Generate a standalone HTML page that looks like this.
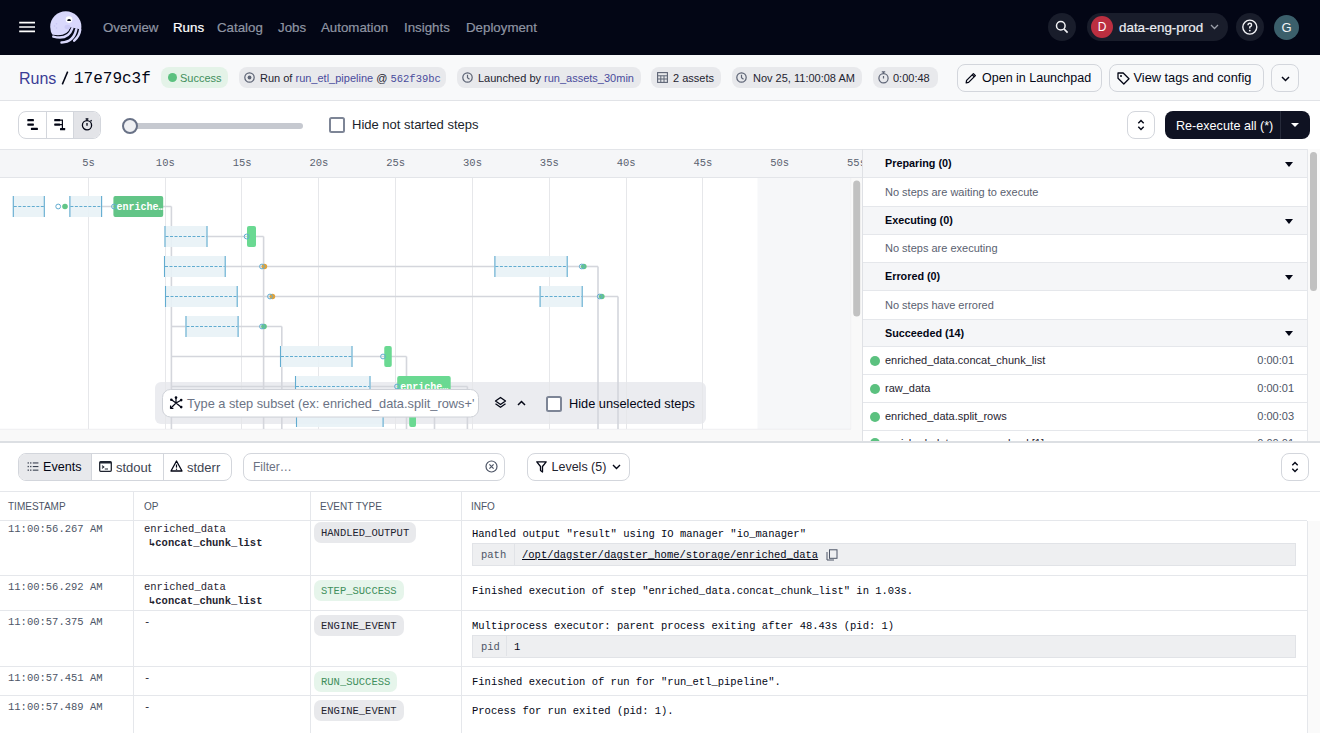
<!DOCTYPE html>
<html><head><meta charset="utf-8">
<style>
*{box-sizing:border-box;margin:0;padding:0}
html,body{width:1320px;height:733px;overflow:hidden;background:#fff;font-family:"Liberation Sans",sans-serif;color:#030615}
.a{position:absolute;white-space:nowrap}
.mono{font-family:"Liberation Mono",monospace}
.navi{position:absolute;top:19.5px;font-size:13.3px;color:#8f95a3;white-space:nowrap;-webkit-text-stroke:0.2px currentColor}
.tag{position:absolute;top:67px;height:21px;border-radius:8px;background:#e8e9ec;font-size:11px;color:#1f2430;white-space:nowrap;line-height:22px}
.tag span.l{color:#4a4c9c}
.btn{position:absolute;background:#f8f9fa;border:1px solid #d3d6dc;border-radius:8px;font-size:12.7px;color:#030615;white-space:nowrap}
.ph{position:absolute;left:863px;width:444px;height:28px;background:#f5f6f8;border-bottom:1px solid #e5e7eb;font-size:10.8px;font-weight:700;color:#030615;padding-left:22px;line-height:27px}
.pb{position:absolute;left:863px;width:444px;height:28px;background:#fff;border-bottom:1px solid #e5e7eb;font-size:11px;color:#5a6170;padding-left:22px;line-height:27px}
.pr{position:absolute;left:863px;width:444px;height:28px;background:#fff;border-bottom:1px solid #e5e7eb;font-size:11px;color:#1f2430;padding-left:22px;line-height:27px}
.pr .dot{position:absolute;left:6.5px;top:8.5px;width:10px;height:10px;border-radius:5px;background:#5bc17f}
.pr .t{position:absolute;right:13px;top:0;color:#4d5566}
.caret{position:absolute;left:1285px;width:0;height:0;border-left:4.5px solid transparent;border-right:4.5px solid transparent;border-top:5px solid #030615}
.th{position:absolute;top:492px;height:29px;font-size:10px;color:#4d5566;line-height:29px}
.ts{position:absolute;left:8px;font-size:10.5px;color:#4d5566}
.op{position:absolute;left:144px;font-size:10.5px;color:#1f2430}
.badge{position:absolute;left:314px;height:21px;border-radius:7px;background:#e8e9ec;font-size:10.5px;color:#1f2430;line-height:22px;padding:0 7px}
.badge.g{background:#e6f5eb;color:#3f8f5c}
.info{position:absolute;left:472px;font-size:10.5px;color:#030615}
.kv{position:absolute;left:472px;width:824px;height:23px;background:#eeeff1;border:1px solid #e1e3e7;font-size:10.5px;line-height:22px}
.kv .k{position:absolute;left:8px;color:#4d5566}
.kv .sep{position:absolute;left:41px;top:0;width:1px;height:21px;background:#e1e3e7}
.kv .v{position:absolute;left:49px;color:#030615}
.hl{position:absolute;left:0;width:1307px;height:1px;background:#e5e7eb}
</style></head><body>

<!-- ============ NAV ============ -->
<div class="a" style="left:0;top:0;width:1320px;height:55px;background:#030615"></div>
<svg class="a" style="left:18px;top:18px" width="20" height="18" viewBox="0 0 20 18"><path d="M1.2 4.7 H17 M1.2 9 H17 M1.2 13.4 H17" stroke="#fff" stroke-width="1.7"/></svg>
<svg class="a" style="left:45px;top:5px" width="45" height="45" viewBox="0 0 45 45">
  <defs><clipPath id="hc"><path d="M0 0 H45 V25 L36 24.5 Q30 23 25.3 22.3 Q22.5 32 8 29.8 L0 29.5 Z"/></clipPath></defs>
  <circle cx="20.8" cy="21.9" r="15.6" fill="#d9d8fc" clip-path="url(#hc)"/>
  <path d="M8.3 31.6 Q23 35.5 27.3 23.3" stroke="#d9d8fc" stroke-width="2.5" fill="none" stroke-linecap="round"/>
  <path d="M16.5 37.4 Q28.5 37.5 31.3 24.3" stroke="#d9d8fc" stroke-width="2.5" fill="none" stroke-linecap="round"/>
  <path d="M29.2 35.6 Q34.5 31 35.2 24.6" stroke="#d9d8fc" stroke-width="2.5" fill="none" stroke-linecap="round"/>
  <circle cx="24" cy="14.6" r="3.3" fill="#fff"/>
  <path d="M22.2 16 A1.9 1.9 0 0 1 26 16 Z" fill="#030615"/>
  <ellipse cx="22.5" cy="22" rx="3" ry="2.2" fill="#cbc9f6"/>
  <circle cx="11.5" cy="18.8" r="0.8" fill="#c9c7f5"/><circle cx="9.5" cy="21" r="0.8" fill="#c9c7f5"/><circle cx="11.5" cy="23" r="0.8" fill="#c9c7f5"/>
</svg>
<div class="navi" style="left:103px">Overview</div>
<div class="navi" style="left:173px;color:#fff">Runs</div>
<div class="navi" style="left:217px">Catalog</div>
<div class="navi" style="left:278px">Jobs</div>
<div class="navi" style="left:321px">Automation</div>
<div class="navi" style="left:404px">Insights</div>
<div class="navi" style="left:466px">Deployment</div>

<div class="a" style="left:1048px;top:13px;width:28px;height:28px;border-radius:14px;background:#191d2b"></div>
<svg class="a" style="left:1055px;top:20px" width="14" height="14" viewBox="0 0 14 14"><circle cx="5.8" cy="5.8" r="4.3" stroke="#f2f2f5" stroke-width="1.5" fill="none"/><path d="M8.9 8.9 L12.6 12.6" stroke="#f2f2f5" stroke-width="1.6"/></svg>
<div class="a" style="left:1087px;top:13px;width:141px;height:28px;border-radius:14px;background:#191d2b"></div>
<div class="a" style="left:1091px;top:16px;width:22px;height:22px;border-radius:11px;background:#bb2f40;color:#fff;font-size:12px;text-align:center;line-height:22px">D</div>
<div class="a" style="left:1119px;top:20px;font-size:13.4px;color:#eceef2;-webkit-text-stroke:0.2px #eceef2">data-eng-prod</div>
<svg class="a" style="left:1210px;top:24px" width="9" height="6" viewBox="0 0 9 6"><path d="M1 1 L4.5 4.5 L8 1" stroke="#9ca0aa" stroke-width="1.3" fill="none"/></svg>
<div class="a" style="left:1236px;top:13px;width:28px;height:28px;border-radius:14px;background:#191d2b"></div>
<svg class="a" style="left:1241px;top:18px" width="18" height="18" viewBox="0 0 18 18"><circle cx="8.8" cy="9.1" r="7" stroke="#f2f2f5" stroke-width="1.4" fill="none"/><path d="M7 7.3 Q7 5.3 8.8 5.3 Q10.6 5.3 10.6 7 Q10.6 8.2 8.8 9 L8.8 10.4" stroke="#f2f2f5" stroke-width="1.4" fill="none"/><circle cx="8.8" cy="12.6" r="0.9" fill="#f2f2f5"/></svg>
<div class="a" style="left:1274px;top:14.5px;width:25px;height:25px;border-radius:13px;background:#3b5f6b;color:#f2f2f5;font-size:13px;text-align:center;line-height:26px">G</div>

<!-- ============ HEADER ============ -->
<div class="a" style="left:0;top:55px;width:1320px;height:46px;background:#f8f9fa;border-bottom:1px solid #e1e3e7"></div>
<div class="a" style="left:19px;top:69.5px;font-size:16px;line-height:18px;color:#3b3d96">Runs</div>
<svg class="a" style="left:60px;top:70px" width="10" height="16" viewBox="0 0 10 16"><path d="M7.7 1.6 L2.3 14.4" stroke="#030615" stroke-width="1.5"/></svg>
<div class="a mono" style="left:74px;top:69.5px;font-size:16px;line-height:18px;color:#030615">17e79c3f</div>

<div class="tag" style="left:161px;width:67px;background:#e4f3e8;color:#3f8f5c"><span class="a" style="left:7px;top:6px;width:9px;height:9px;border-radius:5px;background:#5bc17f"></span><span class="a" style="left:19px;top:0">Success</span></div>

<div class="tag" style="left:239px;width:207px"><svg class="a" style="left:5px;top:5px" width="11" height="11" viewBox="0 0 11 11"><circle cx="5.5" cy="5.5" r="4.7" stroke="#5d6475" stroke-width="1.2" fill="none"/><circle cx="5.5" cy="5.5" r="1.9" fill="#5d6475"/></svg><span class="a" style="left:21px;top:0">Run of <span class="l">run_etl_pipeline</span> @ <span class="l mono" style="font-size:10.5px">562f39bc</span></span></div>

<div class="tag" style="left:457px;width:184px"><svg class="a" style="left:5px;top:5px" width="11" height="11" viewBox="0 0 11 11"><circle cx="5.5" cy="5.5" r="4.7" stroke="#5d6475" stroke-width="1.2" fill="none"/><path d="M5.5 2.8 V5.7 L7.5 7.3" stroke="#5d6475" stroke-width="1.2" fill="none"/></svg><span class="a" style="left:21px;top:0">Launched by <span class="l">run_assets_30min</span></span></div>

<div class="tag" style="left:651px;width:70px"><svg class="a" style="left:6px;top:5px" width="11" height="11" viewBox="0 0 11 11"><rect x="0.6" y="0.6" width="9.8" height="9.8" stroke="#5d6475" stroke-width="1.1" fill="none"/><path d="M0.6 3.8 H10.4 M0.6 7 H10.4 M3.8 3.8 V10.4 M7 3.8 V10.4" stroke="#5d6475" stroke-width="1"/></svg><span class="a" style="left:22px;top:0">2 assets</span></div>

<div class="tag" style="left:732px;width:130px"><svg class="a" style="left:4px;top:5px" width="11" height="11" viewBox="0 0 11 11"><circle cx="5.5" cy="5.5" r="4.7" stroke="#5d6475" stroke-width="1.2" fill="none"/><path d="M5.5 2.8 V5.7 L7.5 7.3" stroke="#5d6475" stroke-width="1.2" fill="none"/></svg><span class="a" style="left:21px;top:0">Nov 25, 11:00:08 AM</span></div>

<div class="tag" style="left:873px;width:65px"><svg class="a" style="left:5px;top:4px" width="11" height="13" viewBox="0 0 11 13"><circle cx="5.5" cy="7.3" r="4.6" stroke="#5d6475" stroke-width="1.2" fill="none"/><path d="M3.8 0.9 H7.2 M5.5 1 V2.6 M5.5 5 V7.5" stroke="#5d6475" stroke-width="1.2" fill="none"/></svg><span class="a" style="left:20px;top:0">0:00:48</span></div>

<div class="btn" style="left:957px;top:64px;width:145px;height:28px"><svg class="a" style="left:7px;top:7px" width="12" height="12" viewBox="0 0 12 12"><path d="M1.2 10.8 L1.6 8.4 L8.4 1.6 L10.4 3.6 L3.6 10.4 Z M7.2 2.8 L9.2 4.8" stroke="#030615" stroke-width="1.3" fill="none" stroke-linejoin="round"/></svg><span class="a" style="left:24px;top:6px;font-size:12.5px;line-height:15px">Open in Launchpad</span></div>
<div class="btn" style="left:1109px;top:64px;width:155px;height:28px"><svg class="a" style="left:7px;top:7px" width="13" height="13" viewBox="0 0 13 13"><path d="M1 1 H6.2 L12 6.8 L6.8 12 L1 6.2 Z" stroke="#030615" stroke-width="1.3" fill="none" stroke-linejoin="round"/><circle cx="4" cy="4" r="1" fill="#030615"/></svg><span class="a" style="left:23.5px;top:5.3px;font-size:12.8px;line-height:15px">View tags and config</span></div>
<div class="btn" style="left:1271px;top:64px;width:28px;height:28px"><svg class="a" style="left:9px;top:11px" width="9" height="6" viewBox="0 0 9 6"><path d="M1 1 L4.5 4.5 L8 1" stroke="#030615" stroke-width="1.5" fill="none"/></svg></div>

<!-- ============ TOOLBAR ============ -->
<div class="a" style="left:0;top:101px;width:1320px;height:48px;background:#fff"></div>
<div class="a" style="left:18px;top:111px;width:83px;height:28px;border:1px solid #d3d6dc;border-radius:8px;background:#fff;overflow:hidden">
  <div class="a" style="left:27px;top:0;width:1px;height:26px;background:#d3d6dc"></div>
  <div class="a" style="left:54px;top:0;width:28px;height:26px;background:#e3e4e8;border-left:1px solid #d3d6dc"></div>
</div>
<svg class="a" style="left:26px;top:118px" width="13" height="14" viewBox="0 0 13 14"><rect x="1.3" y="1.1" width="6.6" height="2.2" rx="0.6" fill="#030615"/><rect x="1.3" y="5.5" width="6.6" height="2.2" rx="0.6" fill="#030615"/><rect x="4.9" y="9.8" width="7" height="2.2" rx="0.6" fill="#030615"/></svg>
<svg class="a" style="left:53px;top:118px" width="14" height="14" viewBox="0 0 14 14"><rect x="1.2" y="1.1" width="6" height="2.2" rx="0.6" fill="#030615"/><rect x="1.2" y="5.5" width="6" height="2.2" rx="0.6" fill="#030615"/><path d="M6.5 2.2 H9.4 V10.5 M6.5 6.6 H9.4" stroke="#030615" stroke-width="1.2" fill="none"/><rect x="7" y="9.9" width="5.2" height="2.4" rx="0.6" fill="#030615"/></svg>
<svg class="a" style="left:80px;top:117px" width="14" height="14" viewBox="0 0 14 14"><circle cx="7" cy="8.2" r="4.6" stroke="#030615" stroke-width="1.3" fill="none"/><path d="M5.6 1.9 H8.4 M7 2 V3.6 M7 6 V8.8 M10.6 4.2 L11.6 3.2" stroke="#030615" stroke-width="1.3"/></svg>

<div class="a" style="left:128px;top:123px;width:175px;height:6px;border-radius:3px;background:#c6c9d0"></div>
<div class="a" style="left:122px;top:118px;width:16px;height:16px;border-radius:8px;background:#eff0f3;border:2px solid #687186"></div>
<div class="a" style="left:329px;top:117px;width:16px;height:16px;border-radius:2.5px;background:#fff;border:2px solid #7d8596"></div>
<div class="a" style="left:352px;top:117.3px;font-size:13px;color:#1a1f2c">Hide not started steps</div>

<div class="a" style="left:1127px;top:111px;width:28px;height:28px;border:1px solid #d3d6dc;border-radius:8px;background:#fff"></div>
<svg class="a" style="left:1137px;top:119px" width="8" height="12" viewBox="0 0 8 12"><path d="M1.3 4.2 L4 1.5 L6.7 4.2 M1.3 7.8 L4 10.5 L6.7 7.8" stroke="#030615" stroke-width="1.4" fill="none"/></svg>
<div class="a" style="left:1165px;top:111px;width:145px;height:28px;border-radius:8px;background:#0f1222"></div>
<div class="a" style="left:1280px;top:111px;width:1px;height:28px;background:#262a3a"></div>
<div class="a" style="left:1176px;top:118.5px;font-size:12.6px;color:#fff">Re-execute all (*)</div>
<div class="a" style="left:1291px;top:123px;width:0;height:0;border-left:4px solid transparent;border-right:4px solid transparent;border-top:4px solid #fff"></div>

<!-- GANTT_PLACEHOLDER -->
<svg class="a" style="left:0;top:149px" width="862" height="293" viewBox="0 149 862 293">
<rect x="0" y="149" width="862" height="29" fill="#f5f6f8"/>
<rect x="0" y="149" width="862" height="1" fill="#e3e5e9"/>
<rect x="0" y="177" width="862" height="1" fill="#e3e5e9"/>
<rect x="757.5" y="178" width="93" height="251.5" fill="#f6f7f9"/>
<rect x="155" y="382" width="551" height="42" rx="6" fill="#ebecf0"/>
<rect x="88" y="178" width="1" height="251" fill="#e6e7ea"/>
<text x="88.50" y="165.5" text-anchor="middle" font-family="Liberation Mono" font-size="10.5" fill="#5b6270">5s</text>
<rect x="165" y="178" width="1" height="251" fill="#e6e7ea"/>
<text x="165.30" y="165.5" text-anchor="middle" font-family="Liberation Mono" font-size="10.5" fill="#5b6270">10s</text>
<rect x="241" y="178" width="1" height="251" fill="#e6e7ea"/>
<text x="242.10" y="165.5" text-anchor="middle" font-family="Liberation Mono" font-size="10.5" fill="#5b6270">15s</text>
<rect x="318" y="178" width="1" height="251" fill="#e6e7ea"/>
<text x="318.90" y="165.5" text-anchor="middle" font-family="Liberation Mono" font-size="10.5" fill="#5b6270">20s</text>
<rect x="395" y="178" width="1" height="251" fill="#e6e7ea"/>
<text x="395.70" y="165.5" text-anchor="middle" font-family="Liberation Mono" font-size="10.5" fill="#5b6270">25s</text>
<rect x="472" y="178" width="1" height="251" fill="#e6e7ea"/>
<text x="472.50" y="165.5" text-anchor="middle" font-family="Liberation Mono" font-size="10.5" fill="#5b6270">30s</text>
<rect x="549" y="178" width="1" height="251" fill="#e6e7ea"/>
<text x="549.30" y="165.5" text-anchor="middle" font-family="Liberation Mono" font-size="10.5" fill="#5b6270">35s</text>
<rect x="626" y="178" width="1" height="251" fill="#e6e7ea"/>
<text x="626.10" y="165.5" text-anchor="middle" font-family="Liberation Mono" font-size="10.5" fill="#5b6270">40s</text>
<rect x="702" y="178" width="1" height="251" fill="#e6e7ea"/>
<text x="702.90" y="165.5" text-anchor="middle" font-family="Liberation Mono" font-size="10.5" fill="#5b6270">45s</text>
<text x="779.70" y="165.5" text-anchor="middle" font-family="Liberation Mono" font-size="10.5" fill="#5b6270">50s</text>
<text x="856.50" y="165.5" text-anchor="middle" font-family="Liberation Mono" font-size="10.5" fill="#5b6270">55s</text>
<rect x="850.5" y="178" width="11.5" height="251.5" fill="#f9f9f9"/>
<rect x="850.5" y="178" width="0.6" height="251.5" fill="#ececee"/>
<rect x="853.2" y="180.5" width="7" height="136" rx="3.5" fill="#c1c1c1"/>
<rect x="0" y="429" width="862" height="12" fill="#f9f9f9"/>
<rect x="0" y="428.8" width="851" height="0.8" fill="#ececee"/>
<line x1="171.4" y1="206.5" x2="171.4" y2="429" stroke="#d4d6dc" stroke-width="1.6"/>
<line x1="263.6" y1="236.5" x2="263.6" y2="429" stroke="#d4d6dc" stroke-width="1.6"/>
<line x1="281.8" y1="326.5" x2="281.8" y2="429" stroke="#d4d6dc" stroke-width="1.6"/>
<line x1="406.5" y1="356.5" x2="406.5" y2="429" stroke="#d4d6dc" stroke-width="1.6"/>
<line x1="434.5" y1="417" x2="434.5" y2="429" stroke="#d4d6dc" stroke-width="1.6"/>
<line x1="467.4" y1="386.5" x2="467.4" y2="429" stroke="#d4d6dc" stroke-width="1.6"/>
<line x1="598" y1="266.5" x2="598" y2="429" stroke="#d4d6dc" stroke-width="1.6"/>
<line x1="618" y1="296.5" x2="618" y2="429" stroke="#d4d6dc" stroke-width="1.6"/>
<line x1="102" y1="206.5" x2="171.4" y2="206.5" stroke="#d4d6dc" stroke-width="1.6"/>
<line x1="207" y1="236.5" x2="263.6" y2="236.5" stroke="#d4d6dc" stroke-width="1.6"/>
<line x1="225" y1="266.5" x2="494.4" y2="266.5" stroke="#d4d6dc" stroke-width="1.6"/>
<line x1="567" y1="266.5" x2="598" y2="266.5" stroke="#d4d6dc" stroke-width="1.6"/>
<line x1="237" y1="296.5" x2="539.6" y2="296.5" stroke="#d4d6dc" stroke-width="1.6"/>
<line x1="582" y1="296.5" x2="618" y2="296.5" stroke="#d4d6dc" stroke-width="1.6"/>
<line x1="171.4" y1="326.5" x2="185.5" y2="326.5" stroke="#d4d6dc" stroke-width="1.6"/>
<line x1="238" y1="326.5" x2="281.8" y2="326.5" stroke="#d4d6dc" stroke-width="1.6"/>
<line x1="171.4" y1="356.5" x2="280" y2="356.5" stroke="#d4d6dc" stroke-width="1.6"/>
<line x1="352" y1="356.5" x2="406.5" y2="356.5" stroke="#d4d6dc" stroke-width="1.6"/>
<line x1="171.4" y1="386.5" x2="295" y2="386.5" stroke="#d4d6dc" stroke-width="1.6"/>
<line x1="370" y1="386.5" x2="467.4" y2="386.5" stroke="#d4d6dc" stroke-width="1.6"/>
<line x1="171.4" y1="416.5" x2="296" y2="416.5" stroke="#d4d6dc" stroke-width="1.6"/>
<line x1="383" y1="416.5" x2="434.5" y2="416.5" stroke="#d4d6dc" stroke-width="1.6"/>
<rect x="12.8" y="196" width="31.999999999999996" height="21" fill="#e8f2f6" fill-opacity="0.9"/>
<line x1="13.3" y1="196" x2="13.3" y2="217" stroke="#62acd0" stroke-width="1.1"/>
<line x1="44.3" y1="196" x2="44.3" y2="217" stroke="#62acd0" stroke-width="1.1"/>
<line x1="13.8" y1="206.5" x2="43.8" y2="206.5" stroke="#62acd0" stroke-width="1" stroke-dasharray="3 1.5"/>
<circle cx="58.2" cy="206.5" r="2.4" fill="none" stroke="#62acd0" stroke-width="1"/>
<circle cx="65" cy="206.5" r="2.8" fill="#62c587"/>
<rect x="69.4" y="196" width="32.69999999999999" height="21" fill="#e8f2f6" fill-opacity="0.9"/>
<line x1="69.9" y1="196" x2="69.9" y2="217" stroke="#62acd0" stroke-width="1.1"/>
<line x1="101.6" y1="196" x2="101.6" y2="217" stroke="#62acd0" stroke-width="1.1"/>
<line x1="70.4" y1="206.5" x2="101.1" y2="206.5" stroke="#62acd0" stroke-width="1" stroke-dasharray="3 1.5"/>
<rect x="113.4" y="196" width="49.79999999999998" height="21" rx="2" fill="#62c587"/>
<text x="116.4" y="210.2" font-family="Liberation Mono" font-weight="700" font-size="10" fill="#fff">enriche…</text>
<circle cx="114" cy="206.5" r="2.4" fill="none" stroke="#62acd0" stroke-width="1"/>
<rect x="164.5" y="226" width="43.0" height="21" fill="#e8f2f6" fill-opacity="0.9"/>
<line x1="165.0" y1="226" x2="165.0" y2="247" stroke="#62acd0" stroke-width="1.1"/>
<line x1="207.0" y1="226" x2="207.0" y2="247" stroke="#62acd0" stroke-width="1.1"/>
<line x1="165.5" y1="236.5" x2="206.5" y2="236.5" stroke="#62acd0" stroke-width="1" stroke-dasharray="3 1.5"/>
<rect x="247" y="226" width="9" height="21" rx="2" fill="#6ad992"/>
<circle cx="246.6" cy="236.5" r="2.4" fill="none" stroke="#62acd0" stroke-width="1"/>
<rect x="164" y="256" width="61.69999999999999" height="21" fill="#e8f2f6" fill-opacity="0.9"/>
<line x1="164.5" y1="256" x2="164.5" y2="277" stroke="#62acd0" stroke-width="1.1"/>
<line x1="225.2" y1="256" x2="225.2" y2="277" stroke="#62acd0" stroke-width="1.1"/>
<line x1="165" y1="266.5" x2="224.7" y2="266.5" stroke="#62acd0" stroke-width="1" stroke-dasharray="3 1.5"/>
<circle cx="264.4" cy="266.5" r="2.8" fill="#e0a33c"/>
<circle cx="262" cy="266.5" r="2.4" fill="none" stroke="#62acd0" stroke-width="1"/>
<rect x="494.4" y="256" width="73.30000000000007" height="21" fill="#e8f2f6" fill-opacity="0.9"/>
<line x1="494.9" y1="256" x2="494.9" y2="277" stroke="#62acd0" stroke-width="1.1"/>
<line x1="567.2" y1="256" x2="567.2" y2="277" stroke="#62acd0" stroke-width="1.1"/>
<line x1="495.4" y1="266.5" x2="566.7" y2="266.5" stroke="#62acd0" stroke-width="1" stroke-dasharray="3 1.5"/>
<circle cx="583.8" cy="266.5" r="2.8" fill="#62c587"/>
<circle cx="581.8" cy="266.5" r="2.4" fill="none" stroke="#62acd0" stroke-width="1"/>
<rect x="165" y="286" width="72.69999999999999" height="21" fill="#e8f2f6" fill-opacity="0.9"/>
<line x1="165.5" y1="286" x2="165.5" y2="307" stroke="#62acd0" stroke-width="1.1"/>
<line x1="237.2" y1="286" x2="237.2" y2="307" stroke="#62acd0" stroke-width="1.1"/>
<line x1="166" y1="296.5" x2="236.7" y2="296.5" stroke="#62acd0" stroke-width="1" stroke-dasharray="3 1.5"/>
<circle cx="272.4" cy="296.5" r="2.8" fill="#e0a33c"/>
<circle cx="270" cy="296.5" r="2.4" fill="none" stroke="#62acd0" stroke-width="1"/>
<rect x="539.6" y="286" width="43.10000000000002" height="21" fill="#e8f2f6" fill-opacity="0.9"/>
<line x1="540.1" y1="286" x2="540.1" y2="307" stroke="#62acd0" stroke-width="1.1"/>
<line x1="582.2" y1="286" x2="582.2" y2="307" stroke="#62acd0" stroke-width="1.1"/>
<line x1="540.6" y1="296.5" x2="581.7" y2="296.5" stroke="#62acd0" stroke-width="1" stroke-dasharray="3 1.5"/>
<circle cx="601.8" cy="296.5" r="2.8" fill="#62c587"/>
<circle cx="599.8" cy="296.5" r="2.4" fill="none" stroke="#62acd0" stroke-width="1"/>
<rect x="185.5" y="316" width="53.099999999999994" height="21" fill="#e8f2f6" fill-opacity="0.9"/>
<line x1="186.0" y1="316" x2="186.0" y2="337" stroke="#62acd0" stroke-width="1.1"/>
<line x1="238.1" y1="316" x2="238.1" y2="337" stroke="#62acd0" stroke-width="1.1"/>
<line x1="186.5" y1="326.5" x2="237.6" y2="326.5" stroke="#62acd0" stroke-width="1" stroke-dasharray="3 1.5"/>
<circle cx="264" cy="326.5" r="2.8" fill="#62c587"/>
<circle cx="262" cy="326.5" r="2.4" fill="none" stroke="#62acd0" stroke-width="1"/>
<rect x="280" y="346" width="72.5" height="21" fill="#e8f2f6" fill-opacity="0.9"/>
<line x1="280.5" y1="346" x2="280.5" y2="367" stroke="#62acd0" stroke-width="1.1"/>
<line x1="352.0" y1="346" x2="352.0" y2="367" stroke="#62acd0" stroke-width="1.1"/>
<line x1="281" y1="356.5" x2="351.5" y2="356.5" stroke="#62acd0" stroke-width="1" stroke-dasharray="3 1.5"/>
<rect x="384.25" y="346" width="7.5" height="21" rx="2" fill="#6ad992"/>
<circle cx="383" cy="356.5" r="2.4" fill="none" stroke="#62acd0" stroke-width="1"/>
<rect x="295" y="376" width="75.5" height="21" fill="#e8f2f6" fill-opacity="0.9"/>
<line x1="295.5" y1="376" x2="295.5" y2="397" stroke="#62acd0" stroke-width="1.1"/>
<line x1="370.0" y1="376" x2="370.0" y2="397" stroke="#62acd0" stroke-width="1.1"/>
<line x1="296" y1="386.5" x2="369.5" y2="386.5" stroke="#62acd0" stroke-width="1" stroke-dasharray="3 1.5"/>
<rect x="397.2" y="376" width="53.5" height="21" rx="2" fill="#6ad992"/>
<text x="400.2" y="390.2" font-family="Liberation Mono" font-weight="700" font-size="10" fill="#fff">enriche…</text>
<circle cx="397" cy="386.5" r="2.4" fill="none" stroke="#62acd0" stroke-width="1"/>
<rect x="296" y="406" width="87.60000000000002" height="21" fill="#e8f2f6" fill-opacity="0.9"/>
<line x1="296.5" y1="406" x2="296.5" y2="427" stroke="#62acd0" stroke-width="1.1"/>
<line x1="383.1" y1="406" x2="383.1" y2="427" stroke="#62acd0" stroke-width="1.1"/>
<line x1="297" y1="416.5" x2="382.6" y2="416.5" stroke="#62acd0" stroke-width="1" stroke-dasharray="3 1.5"/>
<rect x="409.2" y="406" width="6.800000000000011" height="21" rx="2" fill="#6ad992"/>
<rect x="162.5" y="389.5" width="316" height="27.5" rx="8" fill="#fff" stroke="#cfd2d8" stroke-width="1"/>
</svg>
<!-- GANTT_OVERLAY -->
<svg class="a" style="left:169px;top:396px" width="14" height="14" viewBox="0 0 14 14"><g stroke="#030615" stroke-width="1.2" fill="none"><path d="M7 7 L7 1.8 M7 7 L12 4.2 M7 7 L12 11 M7 7 L2.5 3.8 M7 7 L1.5 12.5"/><path d="M1.5 12.5 L1.6 9.6 M1.5 12.5 L4.4 12.4"/></g><g fill="#030615"><circle cx="7" cy="1.6" r="1.3"/><circle cx="12.2" cy="4.1" r="1.3"/><circle cx="12.2" cy="11.1" r="1.3"/><circle cx="2.3" cy="3.7" r="1.3"/></g></svg>
<div class="a" style="left:187px;top:396px;font-size:12.8px;color:#6b7385">Type a step subset (ex: enriched_data.split_rows+'</div>
<svg class="a" style="left:494px;top:396px" width="13" height="13" viewBox="0 0 13 13"><g stroke="#030615" stroke-width="1.3" fill="none" stroke-linejoin="round"><path d="M6.5 1.5 L11.5 5 L6.5 8.5 L1.5 5 Z"/><path d="M1.5 7.8 L6.5 11.3 L11.5 7.8"/></g></svg>
<svg class="a" style="left:517px;top:400px" width="9" height="6" viewBox="0 0 9 6"><path d="M1 5 L4.5 1.5 L8 5" stroke="#030615" stroke-width="1.5" fill="none"/></svg>
<div class="a" style="left:546px;top:395.5px;width:16px;height:16px;border-radius:2.5px;background:#fff;border:2px solid #7d8596"></div>
<div class="a" style="left:569px;top:396px;font-size:12.8px;color:#030615">Hide unselected steps</div>

<!-- ============ RIGHT PANEL ============ -->
<div class="a" style="left:862px;top:149px;width:1px;height:293px;background:#dfe1e5"></div>
<div class="a" style="left:863px;top:149px;width:457px;height:1px;background:#e3e5e9"></div>
<div class="ph" style="top:150px">Preparing (0)</div><div class="caret" style="top:162px"></div>
<div class="pb" style="top:178px;height:29px;line-height:29px">No steps are waiting to execute</div>
<div class="ph" style="top:207px">Executing (0)</div><div class="caret" style="top:219px"></div>
<div class="pb" style="top:235px">No steps are executing</div>
<div class="ph" style="top:263px">Errored (0)</div><div class="caret" style="top:275px"></div>
<div class="pb" style="top:291px;height:29px;line-height:29px">No steps have errored</div>
<div class="ph" style="top:320px;height:27px;line-height:27px">Succeeded (14)</div><div class="caret" style="top:331px"></div>
<div class="pr" style="top:347px"><span class="dot"></span>enriched_data.concat_chunk_list<span class="t">0:00:01</span></div>
<div class="pr" style="top:375px"><span class="dot"></span>raw_data<span class="t">0:00:01</span></div>
<div class="pr" style="top:403px"><span class="dot"></span>enriched_data.split_rows<span class="t">0:00:03</span></div>
<div class="pr" style="top:431px;line-height:25px"><span class="dot" style="top:7px"></span>enriched_data.process_chunk[1]<span class="t">0:00:01</span></div>
<div class="a" style="left:1307px;top:149px;width:13px;height:293px;background:#fafafa;border-left:1px solid #e5e7eb"></div>
<div class="a" style="left:1310px;top:152px;width:7px;height:139px;border-radius:4px;background:#c1c1c1"></div>

<!-- ============ LOGS ============ -->
<div class="a" style="left:0;top:441px;width:1320px;height:2px;background:#dcdfe3"></div>
<div class="a" style="left:0;top:443px;width:1320px;height:49px;background:#fff;border-bottom:1px solid #e5e7eb"></div>
<div class="a" style="left:18px;top:453px;width:214px;height:28px;border:1px solid #d3d6dc;border-radius:8px;background:#fff;overflow:hidden">
  <div class="a" style="left:0;top:0;width:73px;height:26px;background:#e8e9ec;border-right:1px solid #d3d6dc"></div>
  <div class="a" style="left:144px;top:0;width:1px;height:26px;background:#d3d6dc"></div>
</div>
<svg class="a" style="left:27px;top:461px" width="12" height="11" viewBox="0 0 12 11"><g fill="#3a4150"><rect x="0.6" y="1.3" width="1.3" height="1.3"/><rect x="3.1" y="1.3" width="1.3" height="1.3"/><rect x="5.8" y="1.4" width="5.6" height="1.1"/><rect x="0.6" y="4.9" width="1.3" height="1.3"/><rect x="3.1" y="4.9" width="1.3" height="1.3"/><rect x="5.8" y="5" width="5.6" height="1.1"/><rect x="0.6" y="8.5" width="1.3" height="1.3"/><rect x="3.1" y="8.5" width="1.3" height="1.3"/><rect x="5.8" y="8.6" width="5.6" height="1.1"/></g></svg>
<div class="a" style="left:43px;top:459.5px;font-size:12.6px">Events</div>
<svg class="a" style="left:99px;top:461px" width="13" height="11" viewBox="0 0 13 11"><rect x="0.7" y="0.7" width="11.6" height="9.6" rx="1" stroke="#1f2430" stroke-width="1.3" fill="none"/><rect x="0.7" y="0.7" width="11.6" height="1.8" fill="#1f2430"/><path d="M3 4.6 L4.8 6 L3 7.4 M5.8 8 H9" stroke="#1f2430" stroke-width="1.1" fill="none"/></svg>
<div class="a" style="left:116px;top:459.5px;font-size:13px;color:#3d4452">stdout</div>
<svg class="a" style="left:170px;top:460px" width="13" height="12" viewBox="0 0 13 12"><path d="M6.5 1 L12 11 H1 Z" stroke="#030615" stroke-width="1.3" fill="none" stroke-linejoin="round"/><path d="M6.5 4.5 V7.6" stroke="#030615" stroke-width="1.2"/><circle cx="6.5" cy="9.2" r="0.7" fill="#030615"/></svg>
<div class="a" style="left:187px;top:459.5px;font-size:13px;color:#3d4452">stderr</div>

<div class="a" style="left:243px;top:453px;width:262px;height:28px;border:1px solid #d3d6dc;border-radius:8px;background:#fff"></div>
<div class="a" style="left:253px;top:460px;font-size:12px;color:#6b7282">Filter…</div>
<svg class="a" style="left:485px;top:460px" width="13" height="13" viewBox="0 0 13 13"><circle cx="6.5" cy="6.5" r="5.5" stroke="#4d5566" stroke-width="1.2" fill="none"/><path d="M4.4 4.4 L8.6 8.6 M8.6 4.4 L4.4 8.6" stroke="#4d5566" stroke-width="1.2"/></svg>

<div class="a" style="left:527px;top:453px;width:103px;height:28px;border:1px solid #d3d6dc;border-radius:8px;background:#fff"></div>
<svg class="a" style="left:536px;top:461px" width="11" height="12" viewBox="0 0 11 12"><path d="M0.8 0.8 H10.2 L6.5 5.5 V11 L4.5 9.5 V5.5 Z" stroke="#030615" stroke-width="1.3" fill="none" stroke-linejoin="round"/></svg>
<div class="a" style="left:551.5px;top:460px;font-size:12.5px;color:#1f2430">Levels (5)</div>
<svg class="a" style="left:612px;top:464px" width="9" height="6" viewBox="0 0 9 6"><path d="M1 1 L4.5 4.5 L8 1" stroke="#030615" stroke-width="1.4" fill="none"/></svg>

<div class="a" style="left:1281px;top:453px;width:28px;height:28px;border:1px solid #d3d6dc;border-radius:8px;background:#fff"></div>
<svg class="a" style="left:1291px;top:461px" width="8" height="12" viewBox="0 0 8 12"><path d="M1.3 4.2 L4 1.5 L6.7 4.2 M1.3 7.8 L4 10.5 L6.7 7.8" stroke="#030615" stroke-width="1.4" fill="none"/></svg>

<!-- table -->
<div class="hl" style="top:520px"></div>
<div class="a" style="left:133px;top:492px;width:1px;height:241px;background:#e5e7eb"></div>
<div class="a" style="left:310px;top:492px;width:1px;height:241px;background:#e5e7eb"></div>
<div class="a" style="left:461px;top:492px;width:1px;height:241px;background:#e5e7eb"></div>
<div class="a" style="left:1307px;top:521px;width:13px;height:212px;background:#fafafa;border-left:1px solid #e5e7eb"></div>
<div class="th" style="left:8px">TIMESTAMP</div>
<div class="th" style="left:144px">OP</div>
<div class="th" style="left:320px">EVENT TYPE</div>
<div class="th" style="left:471px">INFO</div>

<!-- row1 520-575 -->
<div class="ts mono" style="top:522.5px">11:00:56.267 AM</div>
<div class="op mono" style="top:523px">enriched_data</div>
<div class="op mono" style="top:536px;left:149px;font-weight:700">↳concat_chunk_list</div>
<div class="badge mono" style="top:522px">HANDLED_OUTPUT</div>
<div class="info mono" style="top:528px">Handled output "result" using IO manager "io_manager"</div>
<div class="kv mono" style="top:543px"><span class="k">path</span><span class="sep"></span><span class="v" style="text-decoration:underline">/opt/dagster/dagster_home/storage/enriched_data</span><svg class="a" style="left:353px;top:5px" width="12" height="12" viewBox="0 0 12 12"><rect x="3.5" y="0.8" width="7.5" height="8.5" stroke="#4d5566" stroke-width="1" fill="none"/><path d="M1 3 V11 H8" stroke="#4d5566" stroke-width="1" fill="none"/></svg></div>
<div class="hl" style="top:575px"></div>

<!-- row2 575-610 -->
<div class="ts mono" style="top:580.5px">11:00:56.292 AM</div>
<div class="op mono" style="top:580.5px">enriched_data</div>
<div class="op mono" style="top:594px;left:149px;font-weight:700">↳concat_chunk_list</div>
<div class="badge g mono" style="top:580px">STEP_SUCCESS</div>
<div class="info mono" style="top:584.5px">Finished execution of step "enriched_data.concat_chunk_list" in 1.03s.</div>
<div class="hl" style="top:610px"></div>

<!-- row3 610-666 -->
<div class="ts mono" style="top:616px">11:00:57.375 AM</div>
<div class="op mono" style="top:616px">-</div>
<div class="badge mono" style="top:615px">ENGINE_EVENT</div>
<div class="info mono" style="top:620px">Multiprocess executor: parent process exiting after 48.43s (pid: 1)</div>
<div class="kv mono" style="top:635px"><span class="k">pid</span><span class="a" style="left:33px;top:0;width:1px;height:20px;background:#e1e3e7"></span><span class="v" style="left:41px">1</span></div>
<div class="hl" style="top:666px"></div>

<!-- row4 666-695 -->
<div class="ts mono" style="top:671.5px">11:00:57.451 AM</div>
<div class="op mono" style="top:671.5px">-</div>
<div class="badge g mono" style="top:671px">RUN_SUCCESS</div>
<div class="info mono" style="top:676px">Finished execution of run for "run_etl_pipeline".</div>
<div class="hl" style="top:695px"></div>

<!-- row5 -->
<div class="ts mono" style="top:700.5px">11:00:57.489 AM</div>
<div class="op mono" style="top:700.5px">-</div>
<div class="badge mono" style="top:700px">ENGINE_EVENT</div>
<div class="info mono" style="top:705px">Process for run exited (pid: 1).</div>

</body></html>
